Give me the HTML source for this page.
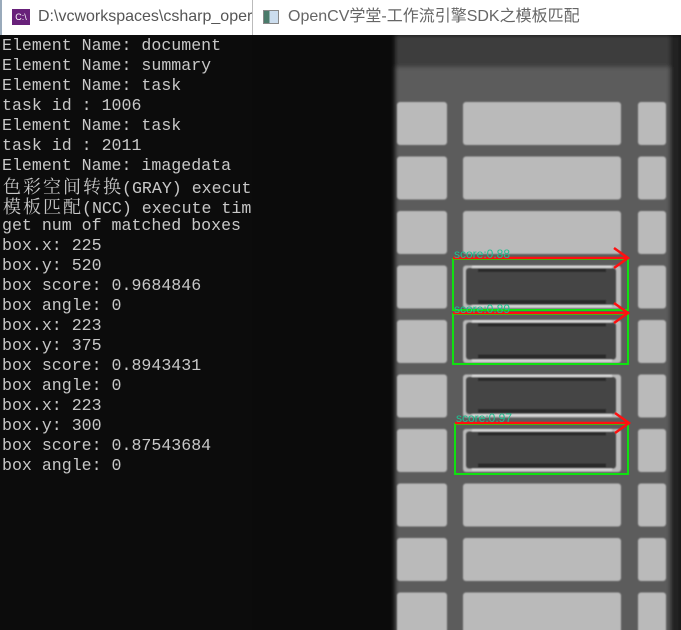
<!DOCTYPE html>
<html><head><meta charset="utf-8"><style>
*{margin:0;padding:0;box-sizing:border-box}
body{width:681px;height:630px;overflow:hidden;background:#fff;position:relative;font-family:"Liberation Sans","Noto Sans CJK SC",sans-serif}
.tb{position:absolute;top:0;height:35px;background:#fff;color:#555;font-size:16px;line-height:33px;white-space:nowrap;overflow:hidden}
#con{position:absolute;left:0;top:35px;width:252px;height:595px;background:#0c0c0c;overflow:hidden;padding-top:1px}
#con div{font-family:"Liberation Mono","Noto Serif CJK SC",monospace;font-size:16.6px;line-height:20px;height:20px;color:#c8c8c8;white-space:pre;padding-left:2px}
.c{display:inline-block;width:20px;font-family:"Noto Serif CJK SC",serif;font-size:18px;text-align:center}
</style></head><body>
<div class="tb" style="left:0;width:252px;border-left:2px solid #9ab">
 <span style="position:absolute;left:10px;top:9px;width:18px;height:16px;background:#68217a;color:#fff;font-size:9px;line-height:16px;text-align:center">C:\</span>
 <span style="position:absolute;left:36px">D:\vcworkspaces\csharp_oper</span>
</div>
<div class="tb" style="left:252px;width:429px;border-left:1px solid #bbb">
 <span style="position:absolute;left:10px;top:10px;width:16px;height:14px;border:1px solid #888;background:linear-gradient(90deg,#4a7a6a 0 40%,#cde 40%)"></span>
 <span style="position:absolute;left:35px;color:#666">OpenCV学堂-工作流引擎SDK之模板匹配</span>
</div>
<div id="con">
<div>Element Name: document</div>
<div>Element Name: summary</div>
<div>Element Name: task</div>
<div>task id : 1006</div>
<div>Element Name: task</div>
<div>task id : 2011</div>
<div>Element Name: imagedata</div>
<div><span class="c">色</span><span class="c">彩</span><span class="c">空</span><span class="c">间</span><span class="c">转</span><span class="c">换</span>(GRAY) execute time</div>
<div><span class="c">模</span><span class="c">板</span><span class="c">匹</span><span class="c">配</span>(NCC) execute time</div>
<div>get num of matched boxes</div>
<div>box.x: 225</div>
<div>box.y: 520</div>
<div>box score: 0.9684846</div>
<div>box angle: 0</div>
<div>box.x: 223</div>
<div>box.y: 375</div>
<div>box score: 0.8943431</div>
<div>box angle: 0</div>
<div>box.x: 223</div>
<div>box.y: 300</div>
<div>box score: 0.87543684</div>
<div>box angle: 0</div>
</div>
<svg style="position:absolute;left:252px;top:35px" width="429" height="595" viewBox="252 35 429 595">
<defs><filter id="b"><feGaussianBlur stdDeviation="2"/></filter><filter id="b1"><feGaussianBlur stdDeviation="0.7"/></filter></defs>
<rect x="252" y="35" width="429" height="595" fill="#0b0b0b"/>
<g filter="url(#b)">
<rect x="395" y="35" width="275" height="600" fill="#5c5c5c"/>
<rect x="395" y="35" width="275" height="32" fill="#3e3e3e"/>
<rect x="670" y="35" width="11" height="600" fill="#222"/>
</g>
<g fill="#bababa" filter="url(#b1)">
<g id="r"><rect x="397" y="102" width="50" height="43" rx="3"/><rect x="463" y="102" width="158" height="43" rx="3"/><rect x="638" y="102" width="28" height="43" rx="3"/></g>
<use href="#r" y="54.5"/><use href="#r" y="109"/><use href="#r" y="163.5"/><use href="#r" y="218"/><use href="#r" y="272.5"/><use href="#r" y="327"/><use href="#r" y="381.5"/><use href="#r" y="436"/><use href="#r" y="490.5"/>
</g>
<g filter="url(#b1)">
<g id="d"><rect x="466" y="268" width="150" height="37" rx="3" fill="#444"/><rect x="478" y="268" width="128" height="4" fill="#2a2a2a"/><rect x="478" y="300" width="128" height="4" fill="#2a2a2a"/><rect x="472" y="266" width="140" height="2" fill="#ddd"/><rect x="472" y="305" width="140" height="2" fill="#ddd"/></g>
<use href="#d" y="54.5"/><use href="#d" y="109"/><use href="#d" y="163.5"/>
</g>
<g fill="none" stroke="#10e010" stroke-width="2">
<rect x="453" y="259" width="175" height="51"/>
<rect x="453" y="314" width="175" height="50"/>
<rect x="455" y="424" width="173" height="50"/>
</g>
<g fill="none" stroke="#ff1010" stroke-width="2.5">
<path d="M453 258H628M614 248L628 258L614 268"/>
<path d="M453 313H628M614 303L628 313L614 323"/>
<path d="M455 423H629M615 413L629 423L615 433"/>
</g>
<g fill="#20c090" font-size="12" font-family="Liberation Sans,sans-serif">
<text x="454" y="258">score:0.88</text>
<text x="454" y="313">score:0.89</text>
<text x="456" y="422">score:0.97</text>
</g>
</svg>
</body></html>
